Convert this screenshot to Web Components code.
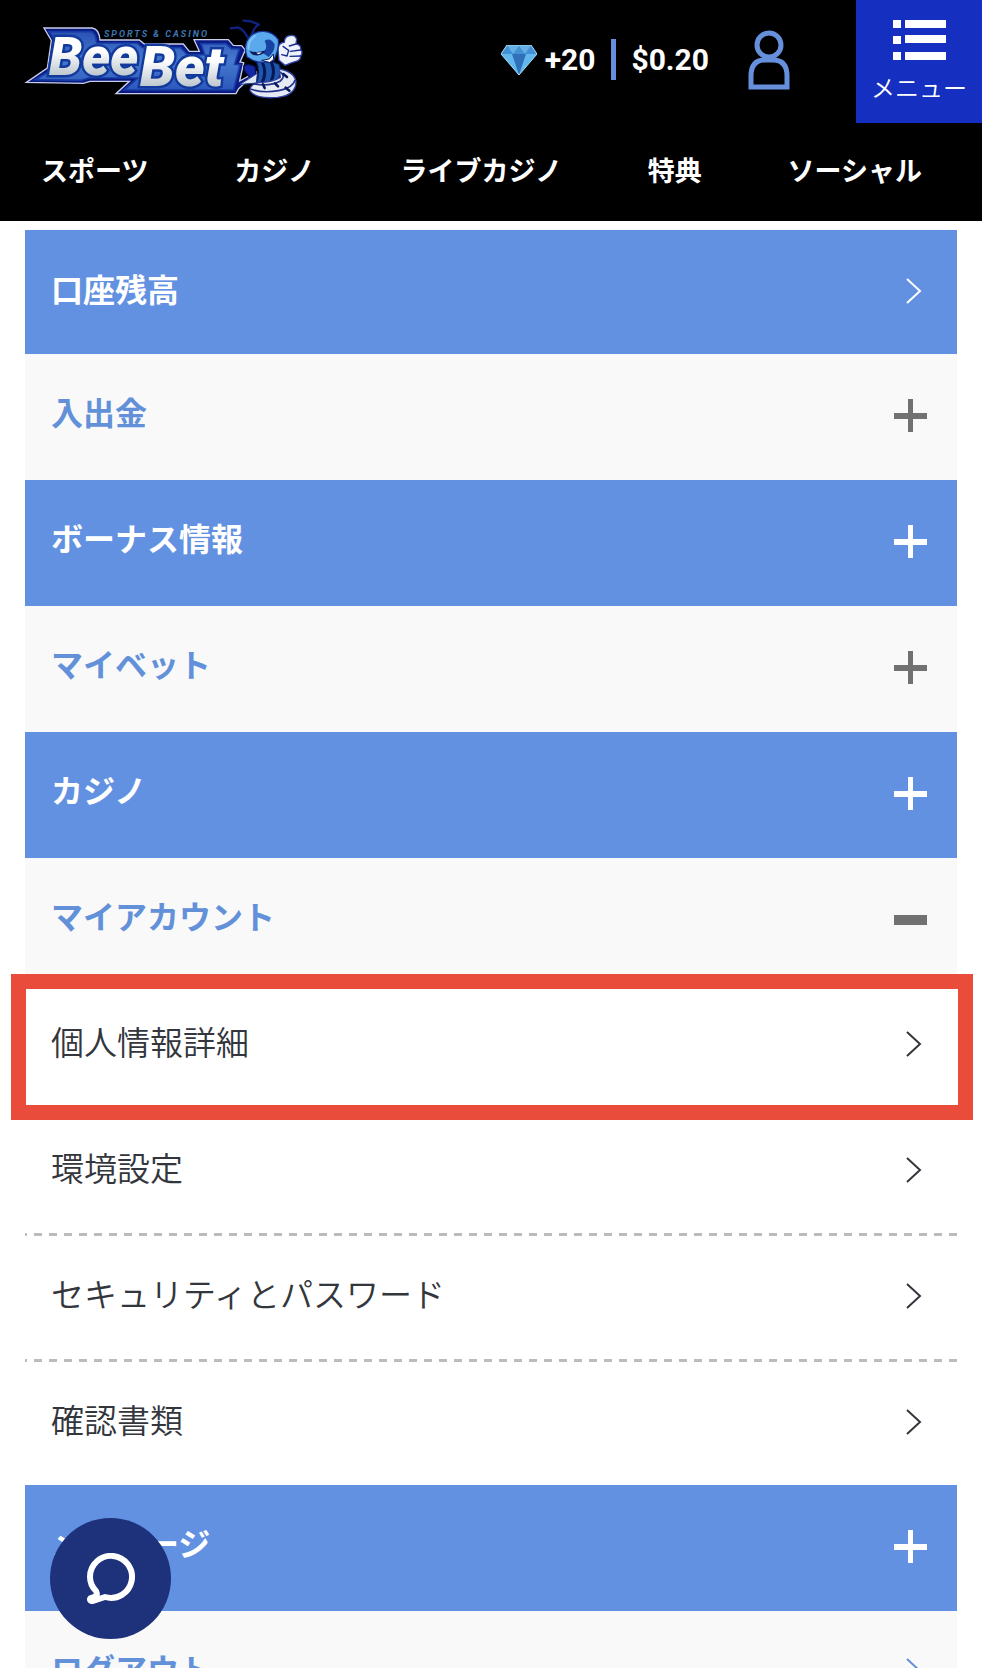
<!DOCTYPE html>
<html lang="ja">
<head>
<meta charset="utf-8">
<meta name="viewport" content="width=device-width, initial-scale=1">
<title>BeeBet</title>
<style>
  body { margin: 0; background: #fff; font-family: Roboto, "Noto Sans CJK JP", sans-serif; }
</style>
</head>
<body>
<bb-app>
  <bb-header slot="header"></bb-header>
  <bb-menu>
    <bb-row tone="blue" icon="arrow">口座残高</bb-row>
    <bb-row tone="light" icon="plus">入出金</bb-row>
    <bb-row tone="blue" icon="plus">ボーナス情報</bb-row>
    <bb-row tone="light" icon="plus">マイベット</bb-row>
    <bb-row tone="blue" icon="plus">カジノ</bb-row>
    <bb-row tone="light" icon="minus">マイアカウント</bb-row>
    <bb-row tone="sub" icon="arrow" marked>個人情報詳細</bb-row>
    <bb-row tone="sub" icon="arrow">環境設定</bb-row>
    <bb-row tone="sub" icon="arrow">セキュリティとパスワード</bb-row>
    <bb-row tone="sub" icon="arrow" last>確認書類</bb-row>
    <bb-row tone="blue" icon="plus">メッセージ</bb-row>
    <bb-row tone="light" icon="arrow">ログアウト</bb-row>
  </bb-menu>
  <bb-chat slot="chat"></bb-chat>
</bb-app>
<script>
const define = (name, html, setup) => customElements.define(name, class extends HTMLElement {
  constructor() {
    super();
    this.attachShadow({ mode: "open" }).innerHTML = html;
  }
  connectedCallback() { if (setup) setup(this, this.shadowRoot); }
});

define("bb-app", `
<style>
  :host { display: flex; flex-direction: column; height: 100vh; }
  main { flex: 1; min-height: 0; overflow-y: auto; scrollbar-width: none; }
</style>
<slot name="header"></slot>
<main><slot></slot></main>
<slot name="chat"></slot>`);

define("bb-logo", `
<style>
  :host { display: block; }
  a { display: block; }
  svg { display: block; width: 310px; height: 100px; }
  text { font-family: Roboto, sans-serif; font-style: italic; font-weight: 900; }
  .word { fill: url(#silver); stroke: #123a9c; stroke-width: 5px; paint-order: stroke; }
  .bee { font-size: 53px; }
  .bet { font-size: 56px; }
  .tag { font-size: 9px; font-weight: 700; letter-spacing: 2px; fill: #3d76b2; }
</style>
<a href="#" aria-label="BeeBet">
<svg viewBox="0 0 310 100">
  <defs>
    <linearGradient id="silver" x1="0" y1="0" x2="0" y2="1">
      <stop offset=".4" stop-color="#fff"/><stop offset=".85" stop-color="#b4c0c8"/>
    </linearGradient>
    <linearGradient id="blue" x1="0" y1="0" x2="0" y2="1">
      <stop offset="0" stop-color="#2a52b4"/><stop offset=".5" stop-color="#4679ce"/><stop offset="1" stop-color="#2c58bb"/>
    </linearGradient>
  </defs>
  <g transform="scale(.33333)">
    <path d="M102 54H247Q267 57 270 90H388L403 102H520L538 124H568L552 89H655L670 106L695 107L706 120L690 156L701 158L689 213L740 185L686 236L678 251H318L358 214H240L220 220L49 217L112 174L124 91Z" fill="#0b1a83" stroke="#c7cee8" stroke-width="4"/>
    <path d="M118 65H242Q258 69 260 99H382L398 113H512L532 134H584L573 101H648L664 116L688 117L674 163L690 164L671 240H343L383 204H236L214 211L76 209L123 181L136 93Z" fill="url(#blue)" stroke="#163ba4" stroke-width="5"/>
  </g>
  <text class="word bee" x="39" y="65">Bee</text>
  <text class="word bet" x="130" y="76">Bet</text>
  <text class="tag" x="94" y="27">SPORTS &amp; CASINO</text>
  <g transform="scale(.33333)" stroke-linejoin="round" stroke-linecap="round">
    <path d="M713 82Q700 57 684 52L662 55M725 73Q735 48 747 44L723 34L700 32" fill="none" stroke="#10217f" stroke-width="7"/>
    <path d="M702 167Q716 160 735 170L740 214Q714 202 702 180Z" fill="#1427a5" stroke="#071152" stroke-width="4"/>
    <path d="M738 152Q774 145 808 163Q819 190 799 215L739 219Q752 186 738 152Z" fill="#1d57ad" stroke="#081653" stroke-width="4"/>
    <path d="M755 153Q773 186 756 219M784 157Q798 185 782 216" fill="none" stroke="#081653" stroke-width="9"/>
    <path d="M690 223Q720 205 742 190L739 218Z" fill="#dfe6f3" stroke="#27409a" stroke-width="3"/>
    <path d="M808 177Q854 186 858 215Q858 255 803 262Q737 268 720 243Q719 223 747 218Q789 216 811 202Z" fill="#e6eaf2" stroke="#3042a2" stroke-width="4"/>
    <path d="M812 187Q828 199 811 213Q781 230 732 222M855 211Q848 235 806 242Q759 250 724 238" fill="none" stroke="#22328b" stroke-width="5"/>
    <path d="M820 192L831 201M795 220L804 229M759 223L764 234M827 233L838 242" stroke="#0b1960" stroke-width="8"/>
    <path d="M804 117Q806 98 823 97Q824 78 840 77Q855 73 860 88L858 102Q874 104 872 119Q880 128 872 138Q872 151 858 154Q842 159 825 166L807 151Z" fill="#eef2fb" stroke="#3447ad" stroke-width="4"/>
    <path d="M819 109L836 121L831 138L815 134M838 108L858 102M841 124L872 120M840 139L871 138" fill="none" stroke="#182a91" stroke-width="4"/>
    <path d="M711 141Q698 101 722 77Q739 63 761 64Q790 66 805 89Q808 117 791 151Q755 164 727 150Z" fill="#5ba9ed" stroke="#15318f" stroke-width="4"/>
    <path d="M764 92Q782 82 794 103Q795 124 776 141L757 128Q776 117 764 92Z" fill="#1744a3"/>
    <path d="M718 122Q740 130 768 121Q758 138 736 136Q724 134 718 122Z" fill="#0b1960"/>
    <path d="M738 128L756 127L746 133Z" fill="#fff"/>
    <path d="M756 151L778 147L790 132L791 148L780 157Z" fill="#fff" stroke="#0d1d64" stroke-width="3"/>
    <path d="M716 116Q714 93 735 78" fill="none" stroke="#85c5fa" stroke-width="5"/>
  </g>
</svg>
</a>`);

define("bb-header", `
<style>
  :host { display: block; background: #000; color: #fff; }
  .top { display: flex; align-items: flex-start; }
  bb-logo { padding: 10px 0 0 10px; }
  .status { display: flex; align-items: center; height: 119px; margin-left: auto; font: bold 30px/40px Roboto, sans-serif; }
  .gem { width: 36px; height: 30px; margin-right: 8px; }
  .bar { width: 5px; height: 41px; background: #6690dc; margin: 0 15px 0 16px; }
  .user { padding: 0; border: 0; background: none; margin: 0 66px 0 39px; }
  svg { display: block; }
  .menu { display: flex; flex-direction: column; align-items: center; gap: 9px; width: 126px; height: 123px; padding: 20px 0 0; border: 0;
    background: #1530c0; color: #fff; font: 350 24px/36px "Noto Sans CJK JP", sans-serif; }
  nav { display: flex; justify-content: space-between; padding: 26px 60px 30px 41px; font: bold 27px/42px "Noto Sans CJK JP", sans-serif; }
  nav a { color: inherit; text-decoration: none; white-space: nowrap; }
</style>
<div class="top">
  <bb-logo></bb-logo>
  <div class="status">
    <svg class="gem" viewBox="0 0 36 30">
      <path d="M6 0H30L36 9L18 30L0 9Z" fill="#62b7ed"/>
      <path d="M6 0H30L36 9H0Z" fill="#4290d5"/>
      <path d="M6 0L12 9L18 1L24 9L30 0Z" fill="#67afe5"/>
      <path d="M11 9H25L18 30Z" fill="#2f70b8"/>
      <path d="M6 0H30L36 9L18 30L0 9Z" fill="none" stroke="#a5dcf5" stroke-width="1"/>
    </svg>
    <span>+20</span><span class="bar"></span><span>$0.20</span>
    <button class="user" aria-label="アカウント">
      <svg width="42" height="60" viewBox="0 0 42 60" fill="none" stroke="#6690dc" stroke-width="5">
        <circle cx="21" cy="15" r="12"/><path d="M3 57V46Q3 30 17 30H25Q39 30 39 46V57Z"/>
      </svg>
    </button>
  </div>
  <button class="menu">
    <svg width="53" height="40" viewBox="0 0 53 40" fill="#fff"><path d="M0 0H8V8H0ZM12 0H53V8H12ZM0 16H8V24H0ZM12 15H53V23H12ZM0 32H8V40H0ZM12 32H53V40H12Z"/></svg>
    <span>メニュー</span>
  </button>
</div>
<nav><a href="#">スポーツ</a><a href="#">カジノ</a><a href="#">ライブカジノ</a><a href="#">特典</a><a href="#">ソーシャル</a></nav>`);

define("bb-menu", `
<style>
  :host { display: flex; flex-direction: column; padding: 9px 25px 0; }
</style>
<slot></slot>`);

const icons = {
  arrow: '<path d="M13 3L26 15L13 27" fill="none" stroke="currentColor" stroke-width="2"/>',
  plus: '<path d="M0 14H33V20H0ZM14 0H19V33H14Z" fill="currentColor"/>',
  minus: '<path d="M0 12H33V22H0Z" fill="currentColor"/>'
};

define("bb-row", `
<style>
  :host { display: block; position: relative; font: bold 32px/48px "Noto Sans CJK JP", sans-serif; }
  .row { display: flex; align-items: center; justify-content: space-between; box-sizing: border-box; width: 100%; height: 126px;
    padding: 0 30px 3px 26px; border: 0; background: none;
    font: inherit; color: inherit; text-align: left; text-decoration: none; }
  .label { padding-bottom: 9px; }
  svg { display: block; flex: none; }
  :host([tone=blue]) { background: #6391e1; color: #fff; }
  :host([tone=light]) { background: #f9f9f9; color: #6391d9; }
  :host([tone=light]:not([icon=arrow])) svg { color: #717171; }
  :host([tone=sub]) { color: #33363c; font-weight: 350; font-size: 33px; }
  :host([tone=sub]) .row { background: repeating-linear-gradient(90deg, transparent 0 9px, #bcbcbc 9px 17px) left bottom / 15px 3px repeat-x;
    background-image: linear-gradient(90deg, #bcbcbc 0 2px, transparent 2px 9px, #bcbcbc 9px); }
  :host([tone=sub][last]) .row { height: 123px; padding-bottom: 0; background: none; }
  :host(:first-child) .row { height: 124px; padding-bottom: 0; }
  :host([marked]) { z-index: 1; }
  :host([marked])::after { content: ""; position: absolute; inset: -10px -16px -10px -14px; border: 15px solid #ea4c3b; pointer-events: none; }
</style>`, (host, root) => {
  const icon = host.getAttribute("icon");
  const row = document.createElement(icon === "arrow" ? "a" : "button");
  if (icon === "arrow") row.href = "#";
  else row.setAttribute("aria-expanded", String(icon === "minus"));
  row.className = "row";
  row.innerHTML = `<span class="label"><slot></slot></span><svg width="33" height="33" viewBox="0 0 33 33" aria-hidden="true">${icons[icon]}</svg>`;
  root.append(row);
});

define("bb-chat", `
<style>
  :host { position: fixed; left: 50px; bottom: 29px; z-index: 2; }
  button { display: grid; place-items: center; width: 121px; height: 121px; padding: 0; border: 0; border-radius: 50%; background: #1e317b; }
</style>
<button aria-label="チャット">
  <svg width="48" height="52" viewBox="0 0 48 52" fill="none" stroke="#fff" stroke-width="6" stroke-linejoin="round">
    <path d="M9 38C5 34 3 29 3 24A21 21 0 1 1 18 44Q12 46 6 48C3 48 2 46 4 45C10 43 11 42 9 38Z"/>
  </svg>
</button>`);
</script>
</body>
</html>
